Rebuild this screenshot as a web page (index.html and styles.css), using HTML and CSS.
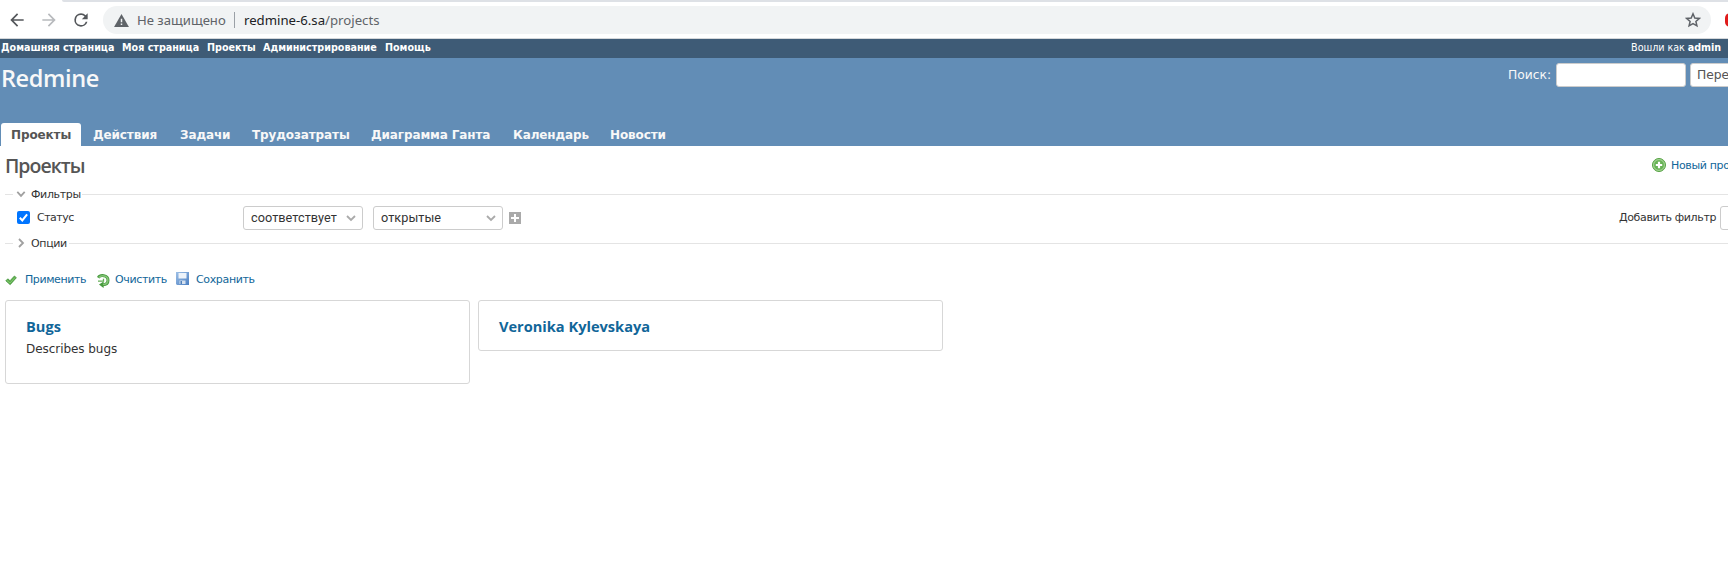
FILE: index.html
```html
<!DOCTYPE html>
<html lang="ru">
<head>
<meta charset="utf-8">
<title>Проекты - Redmine</title>
<link rel="stylesheet" href="styles.css">
</head>
<body>
<div class="browser">
  <div class="tabstrip"></div>
  <div class="toolbar">
    <svg class="nav" viewBox="0 0 24 24"><path d="M20 11H7.8l5.6-5.6L12 4l-8 8 8 8 1.4-1.4L7.8 13H20z"/></svg>
    <svg class="nav dim" viewBox="0 0 24 24"><path d="M4 11h12.2l-5.6-5.6L12 4l8 8-8 8-1.4-1.4 5.6-5.6H4z"/></svg>
    <svg class="nav" viewBox="0 0 24 24"><path d="M17.65 6.35A7.96 7.96 0 0 0 12 4a8 8 0 1 0 7.73 10h-2.08A6 6 0 1 1 12 6c1.66 0 3.14.69 4.22 1.78L13 11h7V4z"/></svg>
    <div class="omnibox">
      <svg class="warn" viewBox="0 0 16 14"><path d="M8 0 16 14H0z" fill="#5f6368"/><path d="M7.2 5h1.6v4H7.2zM7.2 10.2h1.6v1.7H7.2z" fill="#f1f3f4"/></svg>
      <span class="insecure">Не защищено</span>
      <span class="sep"></span>
      <span class="url"><b>redmine-6.sa</b>/projects</span>
      <svg class="star" viewBox="0 0 16 16"><path d="M8 1.8 9.8 6l4.5.4-3.4 3 1 4.4L8 11.5l-3.9 2.3 1-4.4-3.4-3L6.2 6z" fill="none" stroke="#5f6368" stroke-width="1.5"/></svg>
    </div>
    <span class="ext"></span>
  </div>
</div>
<nav class="topmenu">
  <a class="w1">Домашняя страница</a><a class="w2">Моя страница</a><a class="w3">Проекты</a><a class="w4">Администрирование</a><a class="w5">Помощь</a>
  <span class="logged">Вошли как <b>admin</b></span>
</nav>
<header class="header">
  <div class="headrow">
    <h1>Redmine</h1>
    <label>Поиск:</label>
    <span class="field search"></span>
    <span class="field jump">Пере</span>
  </div>
  <nav class="tabs">
    <a class="t1 selected">Проекты</a><a class="t2">Действия</a><a class="t3">Задачи</a><a class="t4">Трудозатраты</a><a class="t5">Диаграмма Ганта</a><a class="t6">Календарь</a><a class="t7">Новости</a>
  </nav>
</header>
<main class="content">
  <div class="titlerow">
    <h2>Проекты</h2>
    <svg class="add" viewBox="0 0 14 14"><circle cx="7" cy="7" r="6.5" fill="#7fc06a" stroke="#56a144"/><circle cx="7" cy="7" r="5.4" fill="#68b356" stroke="#a5d698"/><path d="M7 3.8v6.4M3.8 7h6.4" stroke="#fff" stroke-width="2.2"/></svg>
    <a class="newproject">Новый про</a>
  </div>
  <div class="legend">
    <i></i><svg viewBox="0 0 10 10"><path d="m1.3 2.8 3.7 4 3.7-4" fill="none" stroke="#a0a0a0" stroke-width="1.8"/></svg><span class="l1">Фильтры</span><i class="rest"></i>
  </div>
  <div class="filter">
    <span class="check"><svg viewBox="0 0 13 13"><path d="m2.8 6.8 2.5 2.6 4.8-6" fill="none" stroke="#fff" stroke-width="2"/></svg></span>
    <span class="status">Статус</span>
    <span class="field op">соответствует<svg viewBox="0 0 10 10"><path d="m1 3 4 4 4-4" fill="none" stroke="#aaa" stroke-width="1.8"/></svg></span>
    <span class="field val">открытые<svg viewBox="0 0 10 10"><path d="m1 3 4 4 4-4" fill="none" stroke="#aaa" stroke-width="1.8"/></svg></span>
    <svg class="plus" viewBox="0 0 12 12"><path d="M0 0h12v12H0z" fill="#aaa"/><path d="M6 2v8M2 6h8" stroke="#fff" stroke-width="2"/></svg>
    <span class="addfilter">Добавить фильтр</span>
    <span class="field addsel"></span>
  </div>
  <div class="legend">
    <i></i><svg viewBox="0 0 10 10"><path d="m3 1 4 4-4 4" fill="none" stroke="#a0a0a0" stroke-width="1.8"/></svg><span class="l2">Опции</span><i class="rest"></i>
  </div>
  <div class="buttons">
    <svg class="apply" viewBox="0 0 12 12"><path d="m.8 6.8 2-2 2.2 1.9L9.4 2l2 1.7-6.2 7z" fill="#5bac4a" stroke="#3f9137" stroke-width=".7"/><path d="m2 6.5 3 2.5 5-5.5" fill="none" stroke="#83c873"/></svg>
    <a class="b1">Применить</a>
    <svg class="reload" viewBox="0 0 13 14"><path d="M1.2 3.8C3 .6 11 .4 11 6.3c0 3.2-2.2 4.4-5 4.4" fill="none" stroke="#479a3e" stroke-width="3"/><path d="M6.6 7.4V14L2 10.6z" fill="#479a3e"/><path d="M1.8 3.6C4 1 10.9 1 10.9 6.3c0 2.8-2 4.2-5 4.3" fill="none" stroke="#85c477" stroke-width="1.5"/><path d="M1 7.2h5.5V4.8" fill="none" stroke="#65af57" stroke-width="1.3"/></svg>
    <a class="b2">Очистить</a>
    <svg class="save" viewBox="0 0 13 13"><defs><linearGradient id="disk" x2="1" y2="1"><stop stop-color="#9ec0e6"/><stop offset="1" stop-color="#4b7fc2"/></linearGradient></defs><path d="M0 0h13v13H1l-1-1z" fill="url(#disk)"/><path d="M2.5 1h8v5.5h-8z" fill="#edf3fa"/><path d="M3.5 8.5h6V12h-6z" fill="#d5e0ee"/><path d="M4.5 9h1.5v3H4.5z" fill="#4f7fb9"/></svg>
    <a class="b3">Сохранить</a>
  </div>
  <div class="cards">
    <article class="card tall"><h3>Bugs</h3><p>Describes bugs</p></article>
    <article class="card"><h3 class="vk">Veronika Kylevskaya</h3></article>
  </div>
</main>
</body>
</html>
```
FILE: styles.css
```css
* { box-sizing: border-box; }
body { margin: 0; width: 1728px; height: 565px; overflow: hidden; background: #fff; color: #333; font-family: Verdana, "DejaVu Sans", sans-serif; font-size: 11px; white-space: nowrap; }
svg { display: block; flex: none; }
h1, h2, h3, p { margin: 0; flex: none; }
a { color: #169; }
a, span, label { flex: none; }

.browser { height: 39px; border-bottom: 1px solid #d4d7da; }
.tabstrip { height: 2px; margin-left: 62px; background: #dee1e6; border-bottom-left-radius: 4px; }
.toolbar { height: 36px; display: flex; align-items: center; padding-left: 7px; overflow: hidden; }
.nav { width: 20px; height: 20px; margin-right: 12px; fill: #54575b; }
.nav.dim { fill: #b8babd; }
.omnibox { flex: none; width: 1608px; height: 28px; border-radius: 14px; background: #f1f3f4; display: flex; align-items: center; padding: 0 10px 0 11px; font-family: "Noto Sans", sans-serif; font-size: 13.1px; color: #5f6368; }
.warn { width: 15px; height: 13px; margin-right: 8px; }
.insecure { width: 97px; }
.sep { width: 1px; height: 16px; background: #9aa0a6; margin-right: 9px; }
.url { flex: 1; font-size: 13.2px; }
.url b { color: #202124; font-weight: 400; }
.star { width: 16px; height: 16px; }
.ext { width: 14px; height: 14px; margin-left: 14px; border-radius: 5px; background: #e01b1b; }

.topmenu { height: 19px; background: #3e5b76; display: flex; padding: 0 7px 0 1px; line-height: 18px; font-size: 9.6px; font-weight: 700; color: #fff; }
.topmenu a { color: #fff; }
.w1 { width: 121px; } .w2 { width: 85px; } .w3 { width: 56px; } .w4 { width: 122px; } .w5 { width: 60px; }
.logged { margin-left: auto; font-weight: 400; letter-spacing: -0.05px; }

.header { height: 88px; background: #628db6; color: #f8f8f8; display: flex; flex-direction: column; justify-content: space-between; }
.headrow { display: flex; width: 1728px; height: 40px; padding-top: 5px; overflow: hidden; }
h1 { width: 1508px; padding-left: 1px; font: 600 23.5px/33px "Open Sans", sans-serif; letter-spacing: -0.4px; margin-top: -1px; }
.headrow label { width: 47px; font-size: 12.3px; line-height: 24px; }
.field { height: 24px; border: 1px solid #ccc; border-radius: 3px; background: #fff; color: #333; display: flex; align-items: center; justify-content: space-between; padding: 0 6px 0 7px; }
.search { width: 130px; margin: 0 4px 0 1px; }
.jump { width: 90px; padding-left: 6px; font-size: 12.3px; line-height: 20px; padding-bottom: 1px; color: #555; }
.tabs { display: flex; height: 23px; padding-left: 1px; font-size: 12px; font-weight: 700; line-height: 24px; }
.tabs a { color: #f8f8f8; letter-spacing: -0.12px; padding-left: 10px; }
.tabs .selected { background: #fff; color: #555; border-radius: 3px 3px 0 0; }
.t1 { width: 80px; } .t2 { width: 87px; margin-left: 2px; } .t3 { width: 72px; } .t4 { width: 119px; } .t5 { width: 142px; } .t6 { width: 97px; } .t7 { width: 80px; }

.content { padding-left: 5px; letter-spacing: -0.35px; }
.titlerow { height: 40px; display: flex; }
h2 { width: 1647px; color: #555; font: 600 19.5px/40px "Open Sans", sans-serif; letter-spacing: -1px; }
.add { width: 14px; height: 14px; margin: 12px 5px 0 0; }
.newproject { line-height: 39px; }
.legend { height: 16px; display: flex; align-items: center; line-height: 18px; }
.legend i { width: 8px; height: 1px; background: #e4e4e4; }
.legend svg { width: 10px; height: 10px; margin: 0 4px 0 3px; }
.legend .rest { flex: 1; }
.l1 { width: 51px; margin-left: 1px; padding-top: 2px; } .l2 { width: 38px; margin-left: 1px; padding-top: 2px; }
.filter { height: 33px; padding: 4px 0 0 12px; display: flex; align-items: flex-start; line-height: 23px; }
.check { width: 13px; height: 13px; margin: 5px 7px 0 0; border-radius: 2px; background: #0075ff; }
.status { width: 206px; letter-spacing: -0.5px; }
.field.op, .field.val { font-size: 12.7px; line-height: 20px; padding-bottom: 1px; font-family: Roboto, sans-serif; letter-spacing: 0.05px; }
.op { width: 120px; margin-right: 10px; }
.val { width: 130px; margin-right: 6px; }
.field svg { width: 10px; height: 10px; }
.plus { width: 12px; height: 12px; margin: 6px 1098px 0 0; }
.addfilter { width: 101px; letter-spacing: -0.35px; }
.addsel { width: 150px; }
.buttons { height: 49px; padding-top: 21px; display: flex; line-height: 16px; }
.apply { width: 12px; height: 12px; margin: 2px 8px 0 0; }
.b1 { width: 72px; letter-spacing: -0.4px; }
.reload { width: 13px; height: 14px; margin: 2px 5px 0 0; }
.b2 { width: 61px; }
.save { width: 13px; height: 13px; margin: 0 7px 0 0; }
.cards { display: flex; gap: 8px; align-items: flex-start; }
.card { width: 465px; height: 51px; border: 1px solid #d7d7d7; border-radius: 3px; padding: 14px 20px; }
.card.tall { height: 84px; }
h3 { color: #169; font: 700 14.6px/22px "Open Sans", sans-serif; letter-spacing: 0; }
.card p { font-size: 12px; line-height: 14px; margin-top: 5px; letter-spacing: -0.05px; }
```
